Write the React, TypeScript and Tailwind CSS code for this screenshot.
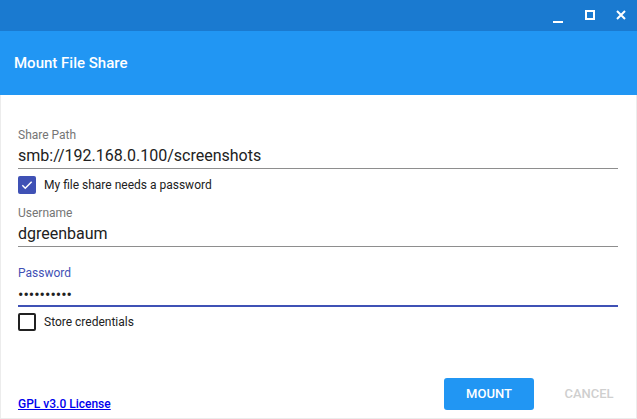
import React from "react";

const font = { fontFamily: "Roboto, 'Noto Sans', sans-serif" };

function Field({
  label,
  value,
  focused,
  password,
}: {
  label: string;
  value: string;
  focused?: boolean;
  password?: boolean;
}) {
  return (
    <div className="flex flex-col">
      <div
        className={`text-[12px] leading-[14px] ${focused ? "text-[#3f51b5]" : "text-[#757575]"}`}
      >
        {label}
      </div>
      <div
        className={`mt-[4px] text-[16px] leading-[20px] text-[#212121] ${
          focused ? "border-b-2 border-[#3f51b5] h-[23px]" : "border-b border-[#8e8e8e] h-[23px]"
        }`}
      >
        {password ? (
          <span className="text-[#212121] text-[16px] relative top-[1px]">{value}</span>
        ) : (
          value
        )}
      </div>
    </div>
  );
}

function Checkbox({ checked, label }: { checked: boolean; label: string }) {
  return (
    <div className="flex items-center h-[18px]">
      {checked ? (
        <div className="w-[18px] h-[18px] rounded-[2px] bg-[#3f51b5] flex items-center justify-center">
          <svg width="14" height="14" viewBox="0 0 24 24">
            <path d="M4 12.5l5 5L20 6.5" fill="none" stroke="#fff" strokeWidth="2.6" />
          </svg>
        </div>
      ) : (
        <div className="w-[18px] h-[18px] rounded-[2px] border-2 border-[#212121]" />
      )}
      <span className="ml-[8px] text-[12px] text-[#212121]">{label}</span>
    </div>
  );
}

export default function App() {
  return (
    <div className="w-[637px] h-[419px] flex flex-col bg-white" style={font}>
      <div className="h-[31px] bg-[#1a7ad0] flex items-center justify-end shrink-0">
        <svg width="10" height="10" viewBox="0 0 10 10" className="mr-[22px] mt-[6px]">
          <rect x="0" y="7" width="10" height="2" fill="#fff" />
        </svg>
        <svg width="10" height="10" viewBox="0 0 10 10" className="mr-[21px] -mt-[1px]">
          <rect x="1" y="1" width="8" height="8" fill="none" stroke="#fff" strokeWidth="2" />
        </svg>
        <svg width="10" height="10" viewBox="0 0 10 10" className="mr-[11px] -mt-[2px]">
          <path d="M1 1L9 9M9 1L1 9" stroke="#fff" strokeWidth="2" />
        </svg>
      </div>
      <div className="h-[64px] bg-[#2196f3] flex items-center pl-[14px] shrink-0">
        <span className="text-white text-[15px] font-medium">Mount File Share</span>
      </div>
      <div className="flex-1 flex flex-col border-x border-b border-[#ececec] pl-[17px] pr-[18px] pt-[33px]">
        <Field label="Share Path" value="smb://192.168.0.100/screenshots" />
        <div className="mt-[7px]">
          <Checkbox checked label="My file share needs a password" />
        </div>
        <div className="mt-[12px]">
          <Field label="Username" value="dgreenbaum" />
        </div>
        <div className="mt-[19px]">
          <Field label="Password" value="••••••••••" focused password />
        </div>
        <div className="mt-[6px]">
          <Checkbox checked={false} label="Store credentials" />
        </div>
        <div className="flex-1" />
        <div className="flex items-end justify-between pb-[8px] -mr-[16px]">
          <a href="#" className="text-[12px] text-[#0000ee] underline font-medium -mb-[3px]">
            GPL v3.0 License
          </a>
          <div className="flex gap-[10px]">
            <button className="w-[90px] h-[32px] rounded-[3px] bg-[#2196f3] text-white text-[13px] font-medium">
              MOUNT
            </button>
            <button className="w-[90px] h-[32px] text-[#cfcfcf] text-[13px] font-medium">
              CANCEL
            </button>
          </div>
        </div>
      </div>
    </div>
  );
}
